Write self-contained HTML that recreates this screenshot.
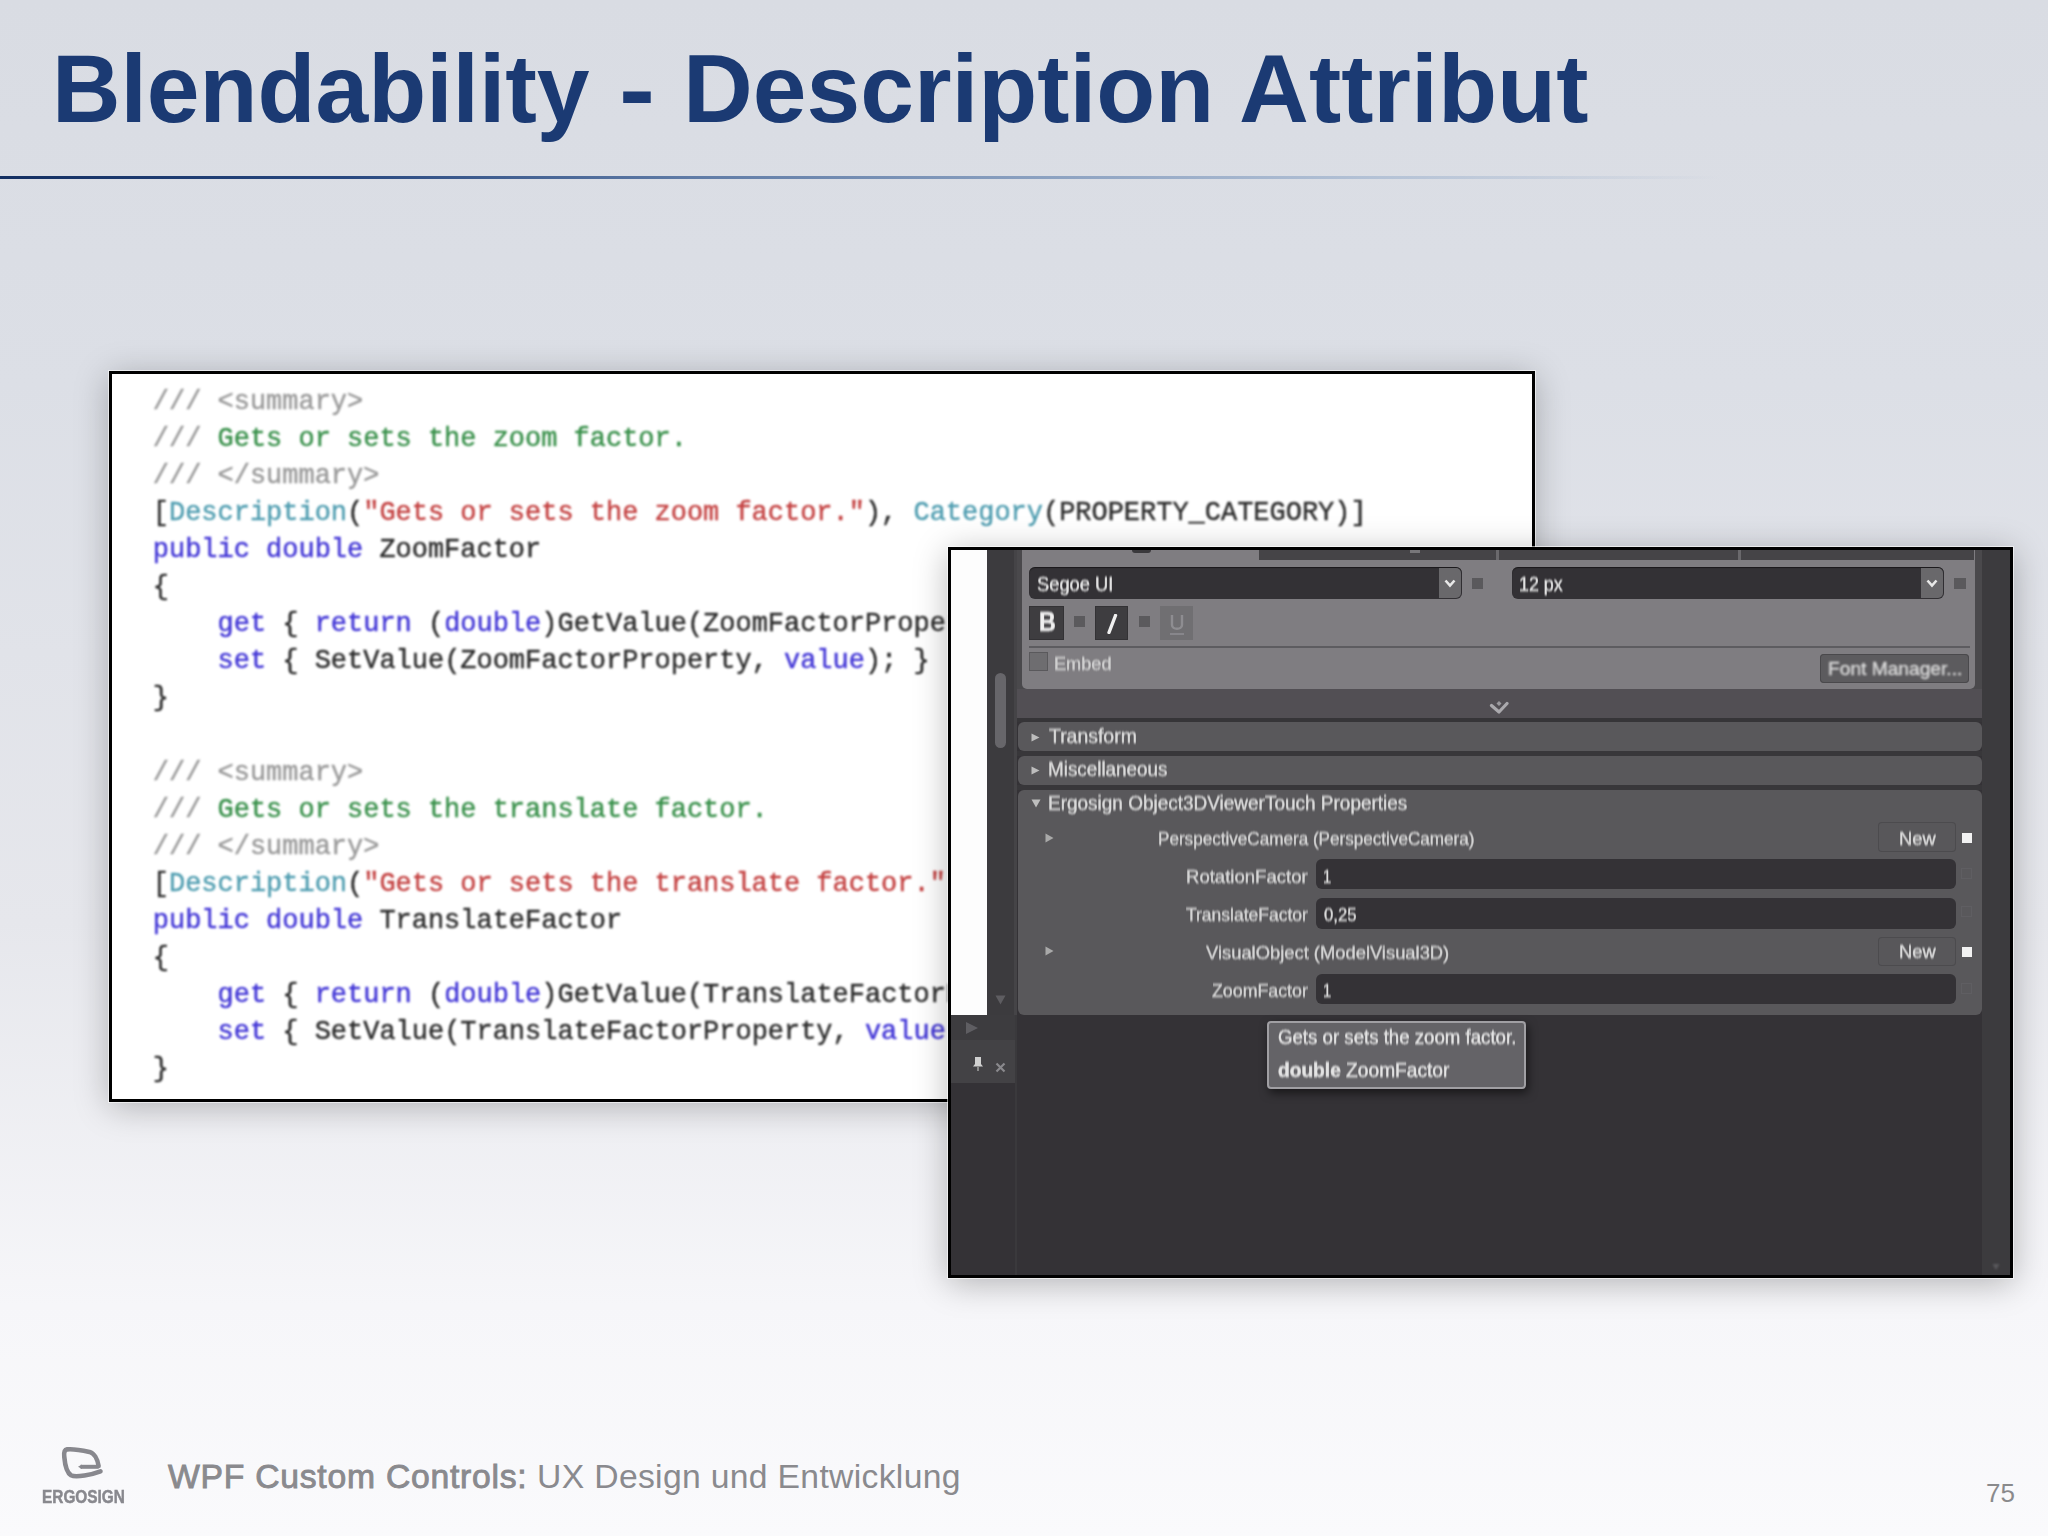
<!DOCTYPE html>
<html><head><meta charset="utf-8">
<style>
html,body{margin:0;padding:0;}
body{width:2048px;height:1536px;overflow:hidden;position:relative;
 background:linear-gradient(to bottom,#d9dce3 0%,#dcdfe6 25%,#e6e7ec 60%,#f6f6f9 85%,#fafafc 100%);
 font-family:"Liberation Sans",sans-serif;}
.abs{position:absolute;}
#title{left:0;top:34px;width:2048px;height:110px;font-size:96px;font-weight:bold;color:#1b3a73;white-space:nowrap;line-height:110px;}
.tw{position:absolute;top:0;transform-origin:0 0;}
#rule{left:0;top:176px;width:1720px;height:3px;background:linear-gradient(to right,#132f62 0%,#284880 20%,#5f7ba6 40%,#8aa0c0 60%,#b4c2d6 80%,rgba(214,220,230,0) 100%);}
#code{left:109px;top:371px;width:1420px;height:725px;border:3px solid #000;background:#fff;
 box-shadow:0 0 0 1px rgba(255,255,255,.6),0 5px 32px rgba(0,0,0,0.26);overflow:hidden;}
#code pre{margin:0;position:absolute;left:40.8px;top:9.6px;font-family:"Liberation Mono",monospace;font-size:26.97px;line-height:37.1px;color:#2c2c2c;-webkit-text-stroke:0.45px currentColor;filter:blur(0.8px);}
.cm{color:#9a9a9a}.cg{color:#38904a}.cs{color:#c44242}.ct{color:#4f9db0}.kw{color:#4236d6}
#blend{left:948px;top:547px;width:1059px;height:725px;border:3px solid #000;background:#343236;
 box-shadow:0 0 0 1px rgba(255,255,255,.6),0 5px 32px rgba(0,0,0,0.28);overflow:hidden;}
#blend .b{position:absolute;}
#blend .t{position:absolute;white-space:nowrap;line-height:1.15;font-family:"Liberation Sans",sans-serif;transform-origin:0 0;filter:blur(0.8px);-webkit-text-stroke:0.45px currentColor;}
#footer{left:168px;top:1460px;font-size:33.7px;line-height:1;color:#8a8a8e;white-space:nowrap;}
#footer b{font-weight:normal;letter-spacing:0.75px;-webkit-text-stroke:0.9px currentColor;}
#ergo{left:42px;top:1486.5px;font-size:19px;line-height:1;font-weight:bold;color:#88888e;transform-origin:0 0;transform:scaleX(0.81);white-space:nowrap;-webkit-text-stroke:0.5px currentColor;}
#pnum{left:1986px;top:1478px;font-size:26px;color:#8a8a8c;}
</style></head><body>
<div id="title" class="abs"><span class="tw" style="left:52.07px;transform:scaleX(0.9881)">Blendability</span><span class="tw" style="left:618.62px;transform:scaleX(1.1269)">-</span><span class="tw" style="left:683.36px;transform:scaleX(1.0061)">Description</span><span class="tw" style="left:1239.28px;transform:scaleX(1.0082)">Attribut</span></div>
<div id="rule" class="abs"></div>
<div id="code" class="abs"><pre><span class="cm">/// &lt;summary&gt;</span>
<span class="cm">///</span> <span class="cg">Gets or sets the zoom factor.</span>
<span class="cm">/// &lt;/summary&gt;</span>
[<span class="ct">Description</span>(<span class="cs">"Gets or sets the zoom factor."</span>), <span class="ct">Category</span>(PROPERTY_CATEGORY)]
<span class="kw">public</span> <span class="kw">double</span> ZoomFactor
{
    <span class="kw">get</span> { <span class="kw">return</span> (<span class="kw">double</span>)GetValue(ZoomFactorProperty); }
    <span class="kw">set</span> { SetValue(ZoomFactorProperty, <span class="kw">value</span>); }
}

<span class="cm">/// &lt;summary&gt;</span>
<span class="cm">///</span> <span class="cg">Gets or sets the translate factor.</span>
<span class="cm">/// &lt;/summary&gt;</span>
[<span class="ct">Description</span>(<span class="cs">"Gets or sets the translate factor."</span>), <span class="ct">Category</span>(PROPERTY_CATEGORY)]
<span class="kw">public</span> <span class="kw">double</span> TranslateFactor
{
    <span class="kw">get</span> { <span class="kw">return</span> (<span class="kw">double</span>)GetValue(TranslateFactorProperty); }
    <span class="kw">set</span> { SetValue(TranslateFactorProperty, <span class="kw">value</span>); }
}</pre></div>
<div id="blend" class="abs">
<div class="b" style="left:0px;top:0px;width:36px;height:465px;background:#fdfdfd"></div>
<div class="b" style="left:36px;top:0px;width:27px;height:465px;background:#3c3b3e"></div>
<div class="b" style="left:63px;top:0px;width:3px;height:465px;background:#454447"></div>
<div class="b" style="left:44px;top:123px;width:11px;height:75px;background:#67666a;border-radius:6px"></div>
<svg class="b" style="left:44px;top:445px" width="11" height="10" viewBox="0 0 11 10"><path d="M0.5 0.5 L10.5 0.5 L5.5 9.5 Z" fill="#5e5d61"/></svg>
<div class="b" style="left:0px;top:465px;width:66px;height:25px;background:#3d3c3f"></div>
<svg class="b" style="left:15px;top:472px" width="12" height="12" viewBox="0 0 12 12"><path d="M0 0 L12 6 L0 12 Z" fill="#5f5e62"/></svg>
<div class="b" style="left:0px;top:490px;width:66px;height:43px;background:#434245"></div>
<svg class="b" style="left:21px;top:507px" width="12" height="15" viewBox="0 0 12 15"><path d="M3 0 H9 V7 L11 9.5 H1 L3 7 Z" fill="#d0d0d0"/><rect x="5" y="9" width="2" height="5" fill="#8a8a8a"/></svg>
<svg class="b" style="left:44px;top:512px" width="11" height="11" viewBox="0 0 11 11"><path d="M1.5 1.5 L9.5 9.5 M9.5 1.5 L1.5 9.5" stroke="#8a898d" stroke-width="2.2"/></svg>
<div class="b" style="left:64px;top:465px;width:2px;height:260px;background:#3a393c"></div>
<div class="b" style="left:66px;top:0px;width:965px;height:172px;background:#4a494c"></div>
<div class="b" style="left:71px;top:-10px;width:953px;height:149px;background:#7f7d81;border-radius:0 0 5px 5px"></div>
<div class="b" style="left:181px;top:0px;width:19px;height:3px;background:#3a393c;border-radius:0 0 4px 4px;filter:blur(0.6px)"></div>
<div class="b" style="left:308px;top:0px;width:715px;height:10px;background:#454447"></div>
<div class="b" style="left:787px;top:0px;width:3px;height:10px;background:#6a696c"></div>
<div class="b" style="left:545px;top:0px;width:3px;height:10px;background:#6a696c"></div>
<div class="b" style="left:459px;top:0px;width:10px;height:3px;background:#777679"></div>
<div class="b" style="left:78px;top:17px;width:433px;height:32px;background:#333135;border-radius:6px;box-shadow:inset 0 1px 1px rgba(0,0,0,.5)"></div>
<div class="b" style="left:488px;top:18px;width:22px;height:30px;background:#69686b;border-radius:0 5px 5px 0"></div>
<svg class="b" style="left:493px;top:29px" width="12" height="9" viewBox="0 0 12 9"><path d="M1.5 1.5 L6 6.5 L10.5 1.5" stroke="#e8e8e8" stroke-width="2.6" fill="none"/></svg>
<div class="t" style="left:86.00px;top:23.33px;font-size:19.5px;color:#e2e2e2;transform:scaleX(0.9388);">Segoe UI</div>
<div class="b" style="left:521px;top:28px;width:11px;height:11px;background:#5a595c"></div>
<div class="b" style="left:561px;top:17px;width:432px;height:32px;background:#333135;border-radius:6px;box-shadow:inset 0 1px 1px rgba(0,0,0,.5)"></div>
<div class="b" style="left:970px;top:18px;width:22px;height:30px;background:#69686b;border-radius:0 5px 5px 0"></div>
<svg class="b" style="left:975px;top:29px" width="12" height="9" viewBox="0 0 12 9"><path d="M1.5 1.5 L6 6.5 L10.5 1.5" stroke="#e8e8e8" stroke-width="2.6" fill="none"/></svg>
<div class="t" style="left:568.08px;top:23.33px;font-size:19.5px;color:#e2e2e2;transform:scaleX(0.9158);">12 px</div>
<div class="b" style="left:1003px;top:28px;width:12px;height:11px;background:#5a595c"></div>
<div class="b" style="left:78px;top:56px;width:35px;height:34px;background:#3e3d40;box-shadow:inset 0 0 0 1px #333235"></div>
<div class="t" style="left:88.17px;top:56.20px;font-size:28px;color:#f0f0f0;font-weight:bold;transform:scaleX(0.8333);">B</div>
<div class="b" style="left:123px;top:66px;width:11px;height:11px;background:#5b5a5d"></div>
<div class="b" style="left:144px;top:56px;width:33px;height:34px;background:#3e3d40;box-shadow:inset 0 0 0 1px #333235"></div>
<svg class="b" style="left:155px;top:64px" width="12" height="20" viewBox="0 0 12 20"><path d="M9.5 1.5 L3 18.5" stroke="#f0f0f0" stroke-width="3.4" stroke-linecap="round"/></svg>
<div class="b" style="left:188px;top:66px;width:11px;height:11px;background:#5b5a5d"></div>
<div class="b" style="left:209px;top:56px;width:33px;height:34px;background:#706f72"></div>
<svg class="b" style="left:217px;top:63px" width="18" height="24" viewBox="0 0 18 24"><path d="M4 2 V12 C4 17 14 17 14 12 V2" stroke="#8e8d91" stroke-width="2.4" fill="none"/><path d="M2 21 H16" stroke="#8e8d91" stroke-width="1.6"/></svg>
<div class="b" style="left:78px;top:96px;width:941px;height:2px;background:#5d5c60"></div>
<div class="b" style="left:78px;top:102px;width:19px;height:19px;background:#6e6d70;box-shadow:inset 0 0 0 1px #5a595c"></div>
<div class="t" style="left:103.04px;top:103.19px;font-size:19px;color:#cfcfcf;transform:scaleX(0.9551);">Embed</div>
<div class="b" style="left:869px;top:104px;width:149px;height:29px;background:#5c5b5e;border-radius:4px;box-shadow:inset 0 0 0 1px #4a494c"></div>
<div class="t" style="left:876.99px;top:108.39px;font-size:19px;color:#d8d8d8;transform:scaleX(1.0092);">Font Manager...</div>
<div class="b" style="left:66px;top:139px;width:965px;height:29px;background:#524f54"></div>
<svg class="b" style="left:537px;top:148px" width="22" height="18" viewBox="0 0 22 18"><path d="M3.5 7.5 L11 14 L19 5.5" stroke="#aaa9ad" stroke-width="3.2" fill="none" stroke-linejoin="round" stroke-linecap="round" style="filter:blur(0.6px)"/><path d="M11 3 L13.5 5.5 L11 8 L8.5 5.5 Z" fill="#9a999d" style="filter:blur(0.5px)"/></svg>
<div class="b" style="left:66px;top:168px;width:965px;height:4px;background:#363538"></div>
<div class="b" style="left:67px;top:172px;width:964px;height:29px;background:#59585b;border-radius:6px"></div>
<svg class="b" style="left:80px;top:183px" width="9" height="9" viewBox="0 0 9 9"><path d="M0.5 0.5 L8.5 4.5 L0.5 8.5 Z" fill="#bdbdbd"/></svg>
<div class="t" style="left:98.00px;top:175.03px;font-size:19.5px;color:#dadada;transform:scaleX(0.9968);">Transform</div>
<div class="b" style="left:66px;top:201px;width:965px;height:5px;background:#38373a"></div>
<div class="b" style="left:67px;top:206px;width:964px;height:29px;background:#59585b;border-radius:6px"></div>
<svg class="b" style="left:80px;top:216px" width="9" height="9" viewBox="0 0 9 9"><path d="M0.5 0.5 L8.5 4.5 L0.5 8.5 Z" fill="#bdbdbd"/></svg>
<div class="t" style="left:97.03px;top:207.53px;font-size:19.5px;color:#dadada;transform:scaleX(0.9665);">Miscellaneous</div>
<div class="b" style="left:66px;top:235px;width:965px;height:5px;background:#38373a"></div>
<div class="b" style="left:67px;top:240px;width:964px;height:225px;background:#59585b;border-radius:6px"></div>
<svg class="b" style="left:80px;top:249px" width="10" height="9" viewBox="0 0 10 9"><path d="M0.5 0.5 L9.5 0.5 L5 8.5 Z" fill="#bdbdbd"/></svg>
<div class="t" style="left:97.03px;top:241.83px;font-size:19.5px;color:#dadada;transform:scaleX(0.9732);">Ergosign Object3DViewerTouch Properties</div>
<svg class="b" style="left:94px;top:283px" width="9" height="10" viewBox="0 0 9 10"><path d="M0.5 0.5 L8.5 5 L0.5 9.5 Z" fill="#a9a9a9"/></svg>
<div class="t" style="left:207.40px;top:277.89px;font-size:19px;color:#d4d4d4;transform:scaleX(0.9001);">PerspectiveCamera (PerspectiveCamera)</div>
<div class="b" style="left:927px;top:272px;width:78px;height:30px;background:#58575a;border-radius:4px;box-shadow:inset 0 0 0 1px #4c4b4e"></div>
<div class="t" style="left:948.03px;top:277.69px;font-size:19px;color:#dcdcdc;transform:scaleX(0.9655);">New</div>
<div class="b" style="left:1011px;top:283px;width:10px;height:10px;background:#f2f2f2"></div>
<div class="b" style="left:365px;top:309px;width:640px;height:30px;background:#343236;border-radius:6px"></div>
<div class="t" style="left:235.02px;top:316.19px;font-size:19px;color:#d4d4d4;transform:scaleX(0.9760);">RotationFactor</div>
<div class="t" style="left:372.22px;top:316.19px;font-size:19px;color:#dcdcdc;transform:scaleX(0.7778);">1</div>
<div class="b" style="left:365px;top:348px;width:640px;height:31px;background:#343236;border-radius:6px"></div>
<div class="t" style="left:234.90px;top:354.49px;font-size:19px;color:#d4d4d4;transform:scaleX(0.9202);">TranslateFactor</div>
<div class="t" style="left:373.00px;top:354.49px;font-size:19px;color:#dcdcdc;transform:scaleX(0.8788);">0,25</div>
<svg class="b" style="left:94px;top:396px" width="9" height="10" viewBox="0 0 9 10"><path d="M0.5 0.5 L8.5 5 L0.5 9.5 Z" fill="#a9a9a9"/></svg>
<div class="t" style="left:254.70px;top:392.29px;font-size:19px;color:#d4d4d4;transform:scaleX(0.9663);">VisualObject (ModelVisual3D)</div>
<div class="b" style="left:927px;top:387px;width:78px;height:29px;background:#58575a;border-radius:4px;box-shadow:inset 0 0 0 1px #4c4b4e"></div>
<div class="t" style="left:948.03px;top:391.39px;font-size:19px;color:#dcdcdc;transform:scaleX(0.9655);">New</div>
<div class="b" style="left:1011px;top:397px;width:10px;height:10px;background:#f2f2f2"></div>
<div class="b" style="left:365px;top:424px;width:640px;height:30px;background:#343236;border-radius:6px"></div>
<div class="t" style="left:260.80px;top:430.49px;font-size:19px;color:#d4d4d4;transform:scaleX(0.9361);">ZoomFactor</div>
<div class="t" style="left:372.22px;top:430.49px;font-size:19px;color:#dcdcdc;transform:scaleX(0.7778);">1</div>
<div class="b" style="left:1010px;top:318px;width:11px;height:11px;border:1px solid #5f5e62;box-sizing:border-box;filter:blur(0.5px)"></div>
<div class="b" style="left:1010px;top:356px;width:11px;height:11px;border:1px solid #5f5e62;box-sizing:border-box;filter:blur(0.5px)"></div>
<div class="b" style="left:1010px;top:433px;width:11px;height:11px;border:1px solid #5f5e62;box-sizing:border-box;filter:blur(0.5px)"></div>
<div class="b" style="left:1031px;top:0px;width:28px;height:725px;background:#3c3b3e"></div>
<svg class="b" style="left:1040px;top:712px" width="10" height="10" viewBox="0 0 10 10"><path d="M1.5 2 L8.5 2 L5 8 Z" fill="#5a595d" style="filter:blur(0.8px)"/></svg>
<div class="b" style="left:316px;top:471px;width:259px;height:68px;background:#646367;border:2px solid #a09fa3;border-radius:4px;box-sizing:border-box;box-shadow:2px 4px 10px rgba(0,0,0,.55)"></div>
<div class="t" style="left:327.00px;top:475.73px;font-size:19.5px;color:#e4e4e4;transform:scaleX(0.9562);">Gets or sets the zoom factor.</div>
<div class="t" style="left:327.00px;top:509.23px;font-size:19.5px;color:#e4e4e4;transform:scaleX(0.9824);"><b>double</b> ZoomFactor</div>
</div><!--/blend-->
<svg class="abs" style="left:40px;top:1440px" width="100" height="70" viewBox="0 0 100 70">
<path d="M40.5 26.8 H58.6" stroke="#88888e" stroke-width="4" fill="none"/>
<path d="M38 26.8 L42 24.6 L42 29 Z" fill="#88888e"/>
<path d="M58.6 26 C57.5 19 54 13.2 49.5 11.9 C42 10.3 31 9 27 9.4 C24 9.8 23.8 12.5 24.3 17 C25 25 26.5 32.5 31 35.3 C36 38 52 34.5 60.5 31.3" stroke="#88888e" stroke-width="4.6" fill="none" stroke-linecap="round"/>
</svg>
<div id="ergo" class="abs">ERGOSIGN</div>
<div id="footer" class="abs"><b>WPF Custom Controls:</b><span style="letter-spacing:0.32px"> UX Design und Entwicklung</span></div>
<div id="pnum" class="abs">75</div>
</body></html>
